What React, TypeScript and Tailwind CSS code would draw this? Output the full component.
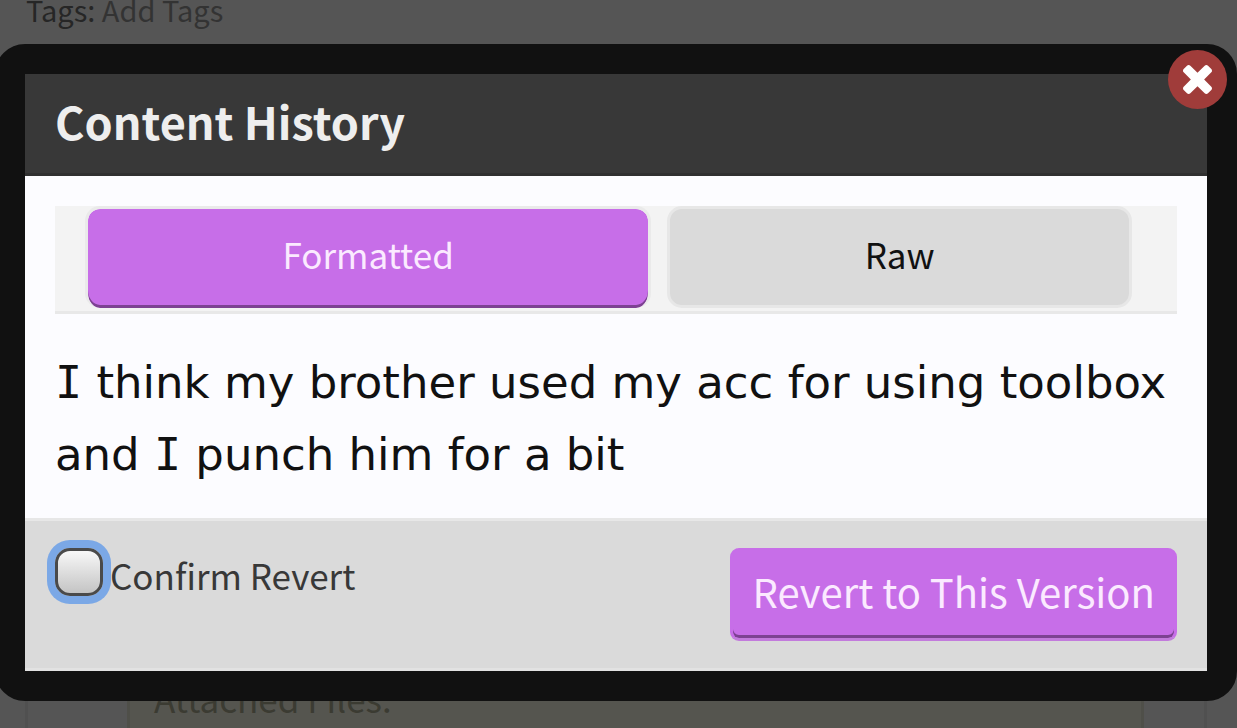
import React, { useState } from "react";

const CloseIcon = () => (
  <svg viewBox="110 366 1188 1188" className="w-[29px] h-[29px]" fill="#fff" aria-hidden="true">
    <path d="M1298 1322q0 40-28 68l-136 136q-28 28-68 28t-68-28l-294-294-294 294q-28 28-68 28t-68-28l-136-136q-28-28-28-68t28-68l294-294-294-294q-28-28-28-68t28-68l136-136q28-28 68-28t68 28l294 294 294-294q28-28 68-28t68 28l136 136q28 28 28 68t-28 68l-294 294 294 294q28 28 28 68z" />
  </svg>
);

const PageBehind = () => (
  <div className="min-h-screen flex flex-col justify-between bg-[#555555] leading-[44px]">
    <p className="px-[26px] -mt-[13px] text-[29px] text-[#333333]">
      <span className="text-[#262626]">Tags:</span> Add Tags
    </p>
    <div className="ml-[25px] mr-[30px] pl-[99px] pr-[60px] border-x-3 border-[#505050]">
      <div className="px-6 h-[52px] border-x-3 border-[#4f4f49] bg-[#55554f] text-[35px] text-[#3b3b32]">Attached Files:</div>
    </div>
  </div>
);

const HistoryTabs = () => {
  const [tab, setTab] = useState("formatted");

  return (
    <div className="flex gap-4 pl-[30px] pr-[45px] pb-[3px] bg-[#f3f3f3] border-b-3 border-[#e8e8e8] text-[35px]" role="tablist">
      <button
        role="tab"
        aria-selected={tab === "formatted"}
        onClick={() => setTab("formatted")}
        className="grow-[567] basis-0 h-[102px] pb-[9px] border-3 border-b-0 border-[#eaeaea] rounded-[15px] bg-[#c76ee8] bg-clip-padding text-[#fbeaff] shadow-[inset_0_-3px_0_#7d4292]"
      >
        Formatted
      </button>
      <button
        role="tab"
        aria-selected={tab === "raw"}
        onClick={() => setTab("raw")}
        className="grow-[464] basis-0 h-[102px] pb-[6px] border-3 border-[#e7e7e7] rounded-[15px] bg-[#dadada] text-[#111111]"
      >
        Raw
      </button>
    </div>
  );
};

// capital I with serifs, so it does not read as a lowercase l
const SerifI = () => <span className="font-['DejaVu_Sans_Mono',monospace]">I</span>;

const ContentHistoryDialog = () => (
  <div className="absolute inset-x-0 top-0 pt-[44px]">
    <div role="dialog" aria-labelledby="history-title" className="relative -ml-[5px] border-30 border-[#111111] rounded-[30px] bg-[#111111]">
      <div className="h-[102px] px-[30px] pb-[6px] flex items-center bg-[#383838] border-b-3 border-[#303030]">
        <h2 id="history-title" className="text-[45px] font-bold text-[#eeeeee]">
          Content History
        </h2>
      </div>
      <div className="bg-[#fcfcff] px-[30px] pt-[30px] pb-[27px]">
        <HistoryTabs />
        <p className="mt-[33px] -mr-5 text-[45px] leading-[72px] text-[#111111] font-['DejaVu_Sans',sans-serif]">
          <SerifI /> think my brother used my acc for using toolbox and <SerifI /> punch him for a bit
        </p>
      </div>
      <div className="flex items-start justify-between px-[30px] py-[27px] bg-[#dadada] border-y-3 border-t-[#e7e7e7] border-b-[#e2e2e2]">
        <label className="flex items-start gap-[7px] text-[35px] leading-[54px] text-[#383838]">
          <input
            type="checkbox"
            className="appearance-none w-12 h-12 border-3 border-[#4a4a4a] rounded-[15px] bg-linear-to-b from-[#f8f8f8] to-[#c4c4c4] shadow-[0_0_0_8px_#7ba8e6]"
          />
          Confirm Revert
        </label>
        <button className="h-[93px] px-[19px] pb-[5px] rounded-[9px] border-x-3 border-b-3 border-x-[#c76ee8] border-b-[#c27bdc] bg-[#c76ee8] text-[40px] text-[#fbeaff] shadow-[inset_0_-3px_0_#7d4292]">
          Revert to This Version
        </button>
      </div>
      <button
        aria-label="Close"
        className="absolute -top-6 -right-5 w-[59px] h-[59px] flex items-center justify-center rounded-full bg-[#a03c3a]"
      >
        <CloseIcon />
      </button>
    </div>
  </div>
);

const App = () => {
  return (
    <div className="relative overflow-hidden font-['Noto_Sans_CJK_SC',sans-serif]">
      <PageBehind />
      <ContentHistoryDialog />
    </div>
  );
};

export default App;
